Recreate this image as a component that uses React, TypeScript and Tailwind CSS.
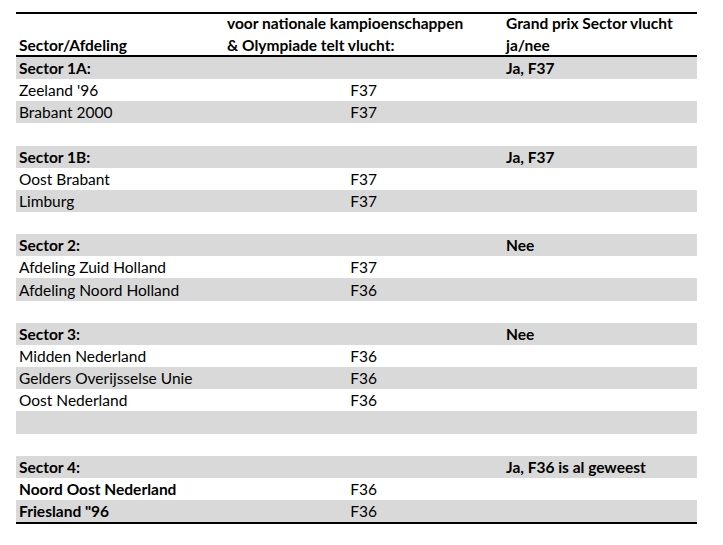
import React from "react";

type Row = { a: string; b?: string; c?: string; gray: boolean; bold?: boolean; h?: number };

const rows: Row[] = [
  { a: "Sector 1A:", c: "Ja, F37", gray: true, bold: true },
  { a: "Zeeland '96", b: "F37", gray: false },
  { a: "Brabant 2000", b: "F37", gray: true },
  { a: "", gray: false, h: 23 },
  { a: "Sector 1B:", c: "Ja, F37", gray: true, bold: true },
  { a: "Oost Brabant", b: "F37", gray: false },
  { a: "Limburg", b: "F37", gray: true },
  { a: "", gray: false },
  { a: "Sector 2:", c: "Nee", gray: true, bold: true },
  { a: "Afdeling Zuid Holland", b: "F37", gray: false },
  { a: "Afdeling Noord Holland", b: "F36", gray: true, h: 23 },
  { a: "", gray: false },
  { a: "Sector 3:", c: "Nee", gray: true, bold: true },
  { a: "Midden Nederland", b: "F36", gray: false },
  { a: "Gelders Overijsselse Unie", b: "F36", gray: true },
  { a: "Oost Nederland", b: "F36", gray: false },
  { a: "", gray: true, h: 23 },
  { a: "", gray: false },
  { a: "Sector 4:", c: "Ja, F36 is al geweest", gray: true, bold: true },
  { a: "Noord Oost Nederland", b: "F36", gray: false, bold: true },
  { a: "Friesland \"96", b: "F36", gray: true, bold: true },
];

export default function App() {
  return (
    <div
      className="w-[723px] h-[545px] bg-white text-black pt-[12px] pl-[16px]"
      style={{ fontFamily: "Lato, 'Liberation Sans', sans-serif" }}
    >
      <div className="w-[681px] border-t-[2px] border-b-[2px] border-black text-[15.5px] leading-[22px]">
        <div className="flex h-[43px] border-b-[2px] border-black font-bold">
          <div className="w-[208px] pl-[3px] flex flex-col justify-end mb-[-1px] whitespace-nowrap">
            <div>Sector/Afdeling</div>
          </div>
          <div className="w-[279px] pl-[3px] flex flex-col justify-end mb-[-1px] whitespace-nowrap">
            <div>voor nationale kampioenschappen</div>
            <div>&amp; Olympiade telt vlucht:</div>
          </div>
          <div className="flex-1 pl-[3px] flex flex-col justify-end mb-[-1px] whitespace-nowrap">
            <div>Grand prix Sector vlucht</div>
            <div>ja/nee</div>
          </div>
        </div>
        {rows.map((r, i) => (
          <div
            key={i}
            className={`flex items-end ${r.gray ? "bg-[#d9d9d9]" : "bg-white"} ${r.h === 23 ? "h-[23px]" : "h-[22px]"}`}
          >
            <div className={`w-[208px] pl-[3px] whitespace-nowrap ${r.bold ? "font-bold" : ""}`}>{r.a}</div>
            <div className="w-[279px] text-center">{r.b}</div>
            <div className="flex-1 pl-[3px] font-bold whitespace-nowrap">{r.c}</div>
          </div>
        ))}
      </div>
    </div>
  );
}
